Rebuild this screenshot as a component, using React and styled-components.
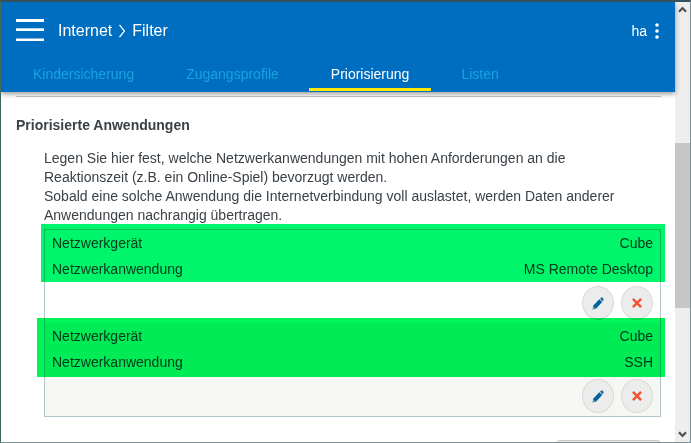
import React from 'react';
import styled, { createGlobalStyle } from 'styled-components';

const GlobalStyle = createGlobalStyle`
  * {
    box-sizing: border-box;
  }

  body {
    margin: 0;
    background: #ffffff;
    font-family: "Liberation Sans", Arial, sans-serif;
    font-size: 14px;
    color: #3a4147;
  }
`;

const Window = styled.div`
  display: flex;
  height: 100vh;
  overflow: hidden;
  border: 1px solid #7d9096;
  border-top: 2px solid #36505c;
  border-left-color: #41695f;
`;

const Page = styled.div`
  flex: 1;
  min-width: 0;
  display: flex;
  flex-direction: column;
`;

const Header = styled.header`
  position: relative;
  flex: none;
  background: #006ec0;
  box-shadow: 0 2px 5px rgba(0, 0, 0, 0.4);
`;

const TopBar = styled.div`
  display: flex;
  align-items: center;
  height: 58px;
  padding: 0 16px 0 15px;
  color: #ffffff;
`;

const MenuButton = styled.button`
  display: flex;
  padding: 0;
  border: 0;
  background: none;
  color: inherit;
  cursor: pointer;
`;

const Breadcrumb = styled.nav`
  display: flex;
  align-items: center;
  gap: 6px;
  margin-left: 14px;
  font-size: 16px;

  a {
    color: inherit;
    text-decoration: none;
  }
`;

const UserMenu = styled.button`
  display: flex;
  align-items: center;
  gap: 8px;
  margin-left: auto;
  padding: 0;
  border: 0;
  background: none;
  color: inherit;
  font: inherit;
  cursor: pointer;
`;

const Tabs = styled.nav`
  display: flex;
  gap: 8px;
  padding: 0 10px 1px;
`;

const Tab = styled.a`
  padding: 0 22px;
  line-height: 28px;
  border-bottom: 3px solid ${({ $active }) => ($active ? '#ffe600' : 'transparent')};
  color: ${({ $active }) => ($active ? '#ffffff' : '#17a3e0')};
  text-decoration: none;
`;

const Content = styled.main`
  padding: 4px 14px 0 15px;
`;

const Divider = styled.hr`
  height: 1px;
  margin: 0;
  border: 0;
  background: #c4c4c4;
`;

const Title = styled.h2`
  margin: 18px 0 14px;
  font-size: 14px;
  line-height: 20px;
`;

const Section = styled.div`
  margin-left: 28px;
`;

const Description = styled.p`
  margin: 0 0 4px;
  padding-right: 22px;
  line-height: 19px;
`;

const List = styled.ul`
  margin: 0;
  padding: 0;
  list-style: none;
  border: 1px solid #b3c5cb;
`;

const Item = styled.li`
  position: relative;
  padding-bottom: 3px;
  background: ${({ $shaded }) => ($shaded ? '#f6f6f3' : '#ffffff')};
`;

const Details = styled.dl`
  margin: 0;
`;

const Detail = styled.div`
  display: flex;
  justify-content: space-between;
  padding: 0 7px;
  line-height: 26px;

  dd {
    margin: 0;
  }
`;

/* marker strip over the two detail lines */
const Marker = styled.div`
  position: absolute;
  z-index: 1;
  top: ${({ $top }) => $top}px;
  left: ${({ $left }) => $left}px;
  right: -5px;
  height: ${({ $height }) => $height}px;
  background: ${({ $color }) => $color};
  mix-blend-mode: multiply;
  pointer-events: none;
`;

const Actions = styled.div`
  display: flex;
  justify-content: flex-end;
  gap: 7px;
  padding: 4px 7px 0;
`;

const RoundButton = styled.button`
  display: flex;
  align-items: center;
  justify-content: center;
  width: 32px;
  height: 34px;
  padding: 0;
  border: 1px solid #dadada;
  border-radius: 50%;
  background: #ececec;
  cursor: pointer;
`;

const Footer = styled.div`
  display: flex;
  justify-content: flex-end;
  margin-top: 23px;
`;

const NewButton = styled.button`
  width: 105px;
  height: 34px;
  border: 1px solid #c6c6c6;
  border-radius: 4px;
  background: #ececec;
  font: inherit;
`;

const Scrollbar = styled.div`
  flex: none;
  display: flex;
  flex-direction: column;
  width: 15px;
  background: #eeeeee;
`;

const ScrollArrow = styled.button`
  display: flex;
  align-items: center;
  justify-content: center;
  height: 15px;
  padding: 0;
  border: 0;
  background: none;
`;

const ScrollSpace = styled.div`
  flex: ${({ $size }) => $size};
`;

const ScrollThumb = styled.div`
  flex: 165;
  background: #c6c6c6;
`;

const entries = [
  {
    id: 1,
    device: 'Cube',
    application: 'MS Remote Desktop',
    marker: { $top: -6, $left: -4, $height: 58, $color: '#00f56a' },
  },
  {
    id: 2,
    device: 'Cube',
    application: 'SSH',
    marker: { $top: -5, $left: -8, $height: 59, $color: '#00f45a' },
  },
];

const tabs = ['Kindersicherung', 'Zugangsprofile', 'Priorisierung', 'Listen'];

function MenuIcon() {
  return (
    <svg width="28" height="24" viewBox="0 0 28 24" fill="currentColor" aria-hidden="true">
      <rect y="0" width="28" height="3" />
      <rect y="9.3" width="28" height="2.7" />
      <rect y="19.5" width="28" height="2.5" />
    </svg>
  );
}

function ChevronIcon() {
  return (
    <svg width="8" height="14" viewBox="0 0 8 14" fill="none" stroke="currentColor" strokeWidth="1.2" aria-hidden="true">
      <path d="M1.5 1 6.5 7 1.5 13" />
    </svg>
  );
}

function DotsIcon() {
  return (
    <svg width="4" height="16" viewBox="0 0 4 16" fill="currentColor" aria-hidden="true">
      <circle cx="2" cy="2" r="1.8" />
      <circle cx="2" cy="8" r="1.8" />
      <circle cx="2" cy="14" r="1.8" />
    </svg>
  );
}

function PencilIcon() {
  return (
    <svg width="12" height="13" viewBox="0 0 12 13" aria-hidden="true">
      <path d="M0.6 12.4 1.2 8.8 7.3 2.2 10.2 5 4.2 11.5Z" fill="#00629f" />
      <path d="M7.9 1.7 9 0.7Q9.9 0 10.8 0.8L11.4 1.6Q12 2.4 11.3 3.4L10.6 4.4Z" fill="#2f6f94" />
      <path d="M1.6 9.6 3.4 11.3 0.8 12Z" fill="#7ea8c0" />
    </svg>
  );
}

function DeleteIcon() {
  return (
    <svg width="10" height="10" viewBox="0 0 10 10" stroke="#f4502f" strokeWidth="2.4" aria-hidden="true">
      <path d="M0.9 0.9 9.1 9.1M9.1 0.9 0.9 9.1" />
    </svg>
  );
}

function ArrowIcon({ down }) {
  return (
    <svg width="9" height="7" viewBox="0 0 9 7" fill="none" stroke="#505050" strokeWidth="2.2" aria-hidden="true">
      <path d={down ? 'M1 1.2 4.5 5 8 1.2' : 'M1 5.8 4.5 2 8 5.8'} />
    </svg>
  );
}

function Entry({ entry, shaded }) {
  return (
    <Item $shaded={shaded}>
      <Details>
        <Detail>
          <dt>Netzwerkgerät</dt>
          <dd>{entry.device}</dd>
        </Detail>
        <Detail>
          <dt>Netzwerkanwendung</dt>
          <dd>{entry.application}</dd>
        </Detail>
      </Details>
      <Actions>
        <RoundButton type="button" aria-label="Bearbeiten">
          <PencilIcon />
        </RoundButton>
        <RoundButton type="button" aria-label="Löschen">
          <DeleteIcon />
        </RoundButton>
      </Actions>
      <Marker {...entry.marker} />
    </Item>
  );
}

function App() {
  return (
    <>
      <GlobalStyle />
      <Window>
        <Page>
          <Header>
            <TopBar>
              <MenuButton type="button" aria-label="Menü">
                <MenuIcon />
              </MenuButton>
              <Breadcrumb>
                <a href="#internet">Internet</a>
                <ChevronIcon />
                <a href="#filter">Filter</a>
              </Breadcrumb>
              <UserMenu type="button">
                ha
                <DotsIcon />
              </UserMenu>
            </TopBar>
            <Tabs>
              {tabs.map((tab) => (
                <Tab key={tab} href={`#${tab}`} $active={tab === 'Priorisierung'}>
                  {tab}
                </Tab>
              ))}
            </Tabs>
          </Header>
          <Content>
            <Divider />
            <Title>Priorisierte Anwendungen</Title>
            <Section>
              <Description>
                Legen Sie hier fest, welche Netzwerkanwendungen mit hohen Anforderungen an die
                Reaktionszeit (z.B. ein Online-Spiel) bevorzugt werden.
                <br />
                Sobald eine solche Anwendung die Internetverbindung voll auslastet, werden Daten anderer
                Anwendungen nachrangig übertragen.
              </Description>
              <List>
                {entries.map((entry, index) => (
                  <Entry key={entry.id} entry={entry} shaded={index % 2 === 1} />
                ))}
              </List>
            </Section>
            <Footer>
              <NewButton type="button" aria-label="Neue Regel" />
            </Footer>
          </Content>
        </Page>
        <Scrollbar>
          <ScrollArrow type="button" aria-label="Nach oben">
            <ArrowIcon />
          </ScrollArrow>
          <ScrollSpace $size={126} />
          <ScrollThumb />
          <ScrollSpace $size={119} />
          <ScrollArrow type="button" aria-label="Nach unten">
            <ArrowIcon down />
          </ScrollArrow>
        </Scrollbar>
      </Window>
    </>
  );
}

export default App;
